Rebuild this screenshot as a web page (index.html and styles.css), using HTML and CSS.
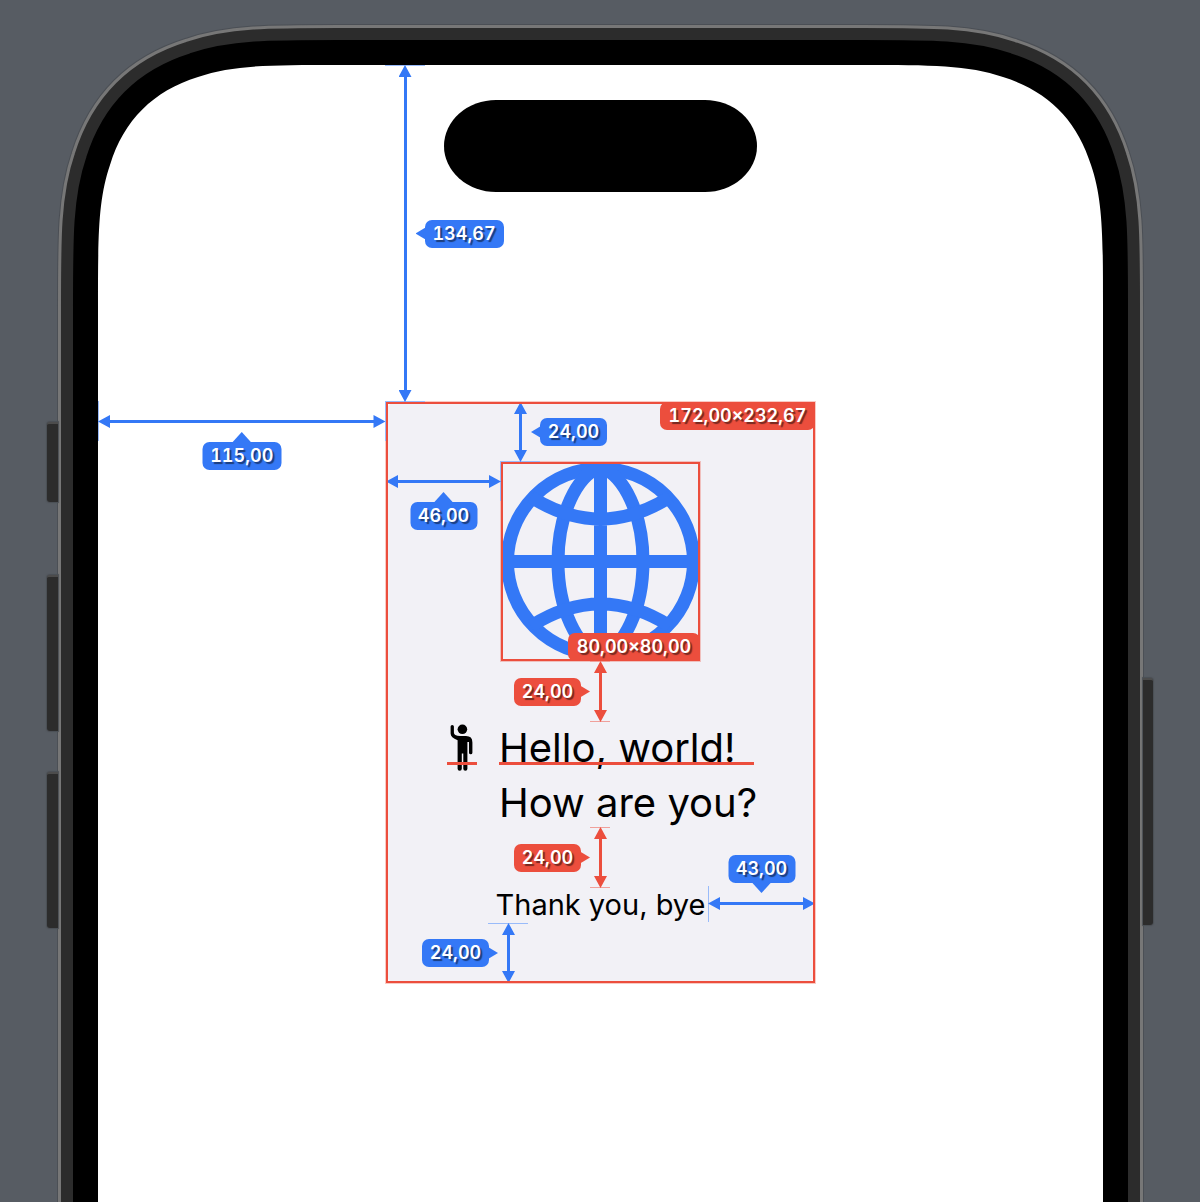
FILE: index.html
```html
<!DOCTYPE html>
<html lang="en">
<head>
<meta charset="utf-8">
<meta name="viewport" content="width=device-width, initial-scale=1">
<title>Layout inspector</title>
<link rel="stylesheet" href="styles.css">
</head>
<body>
<svg class="defs" aria-hidden="true">
  <path id="curve" d="M42 400V283C42 214 42 177 54 142C68 97 97 68 142 54C177 42 214 42 283 42H400V400Z"/>
  <symbol id="corner" viewBox="0 0 300 300">
    <rect class="c-page" width="300" height="300"/>
    <use href="#curve" class="c-edge"/>
    <use href="#curve" class="c-rim"/>
    <use href="#curve" class="c-band"/>
    <use href="#curve" class="c-bezel"/>
    <use href="#curve" class="c-screen"/>
  </symbol>
</svg>
<main class="phone">
  <i class="key key-action"></i>
  <i class="key key-up"></i>
  <i class="key key-down"></i>
  <i class="key key-power"></i>
  <svg class="corner left"><use href="#corner"/></svg>
  <svg class="corner right"><use href="#corner"/></svg>
  <div class="bezel">
    <div class="screen">
      <div class="island"></div>
      <section class="card">
        <div class="globe">
          <svg viewBox="0 0 199 199" role="img" aria-label="Globe">
            <g fill="none" stroke="currentColor" stroke-width="13">
              <circle cx="99.5" cy="99.5" r="93"/>
              <path d="M99.5 5C76 13 57 52 57 99.5S76 186 99.5 194C123 186 142 147 142 99.5S123 13 99.5 5Z"/>
              <path d="M99.5 6V193M6 99.5H193M30 35Q99.5 79 169 35M30 164Q99.5 120 169 164"/>
            </g>
          </svg>
          <span class="size">80,00×80,00</span>
        </div>
        <div class="greeting">
          <div class="person baseline">
            <svg viewBox="0 0 30 50" role="img" aria-label="Waving person">
              <circle cx="15.4" cy="7.3" r="4.8"/>
              <path d="M3.6 4.6Q3.6 2.9 5.2 2.9Q6.9 2.9 6.9 4.6V10.5Q6.9 12.2 8.3 13Q10.2 14.1 13 14.1H19Q25.4 14.1 25.4 20.4V30.7Q25.4 32.3 23.7 32.3Q22 32.3 22 30.7V20H20.4V46.8Q20.4 48.8 18.4 48.8Q16.3 48.8 16.3 46.8V31.5H14.8V46.8Q14.8 48.8 12.7 48.8Q10.6 48.8 10.6 46.8V18.3Q3.6 15.6 3.6 11.5Z"/>
            </svg>
          </div>
          <div class="lines baseline">
            <p>Hello, world!</p>
            <p>How are you?</p>
          </div>
        </div>
        <p class="bye">Thank you, bye</p>
        <span class="size">172,00×232,67</span>

        <div class="arrow v blue pad-top"><span class="tag from-left">24,00</span></div>
        <div class="arrow h blue globe-left"><span class="tag from-above">46,00</span></div>
        <div class="arrow v red gap-one"><span class="tag from-right">24,00</span></div>
        <div class="arrow v red gap-two"><span class="tag from-right">24,00</span></div>
        <div class="arrow h blue bye-right"><span class="tag from-below">43,00</span></div>
        <div class="arrow v blue pad-bottom"><span class="tag from-right">24,00</span></div>
      </section>
      <div class="arrow v blue card-top"><span class="tag from-left">134,67</span></div>
      <div class="arrow h blue card-left"><span class="tag from-above">115,00</span></div>
    </div>
  </div>
</main>
</body>
</html>
```

FILE: styles.css
```css
:root {
  --page: #575c63;
  --rim: #777777;
  --band: #2c2c2c;
  --edge: #4b4f55;
  --blue: #3478f6;
  --red: #ec4e3d;
}

* { box-sizing: border-box; }

body {
  margin: 0;
  min-height: 100vh;
  display: flex;
  background: var(--page);
  color: #000;
  font-family: Inter, "Liberation Sans", sans-serif;
}

p { margin: 0; }

.defs { position: absolute; width: 0; height: 0; }

/* Device */
.phone {
  position: relative;
  flex: 1;
  display: flex;
  margin: 25px 57px 0 58px;
  border: 3px solid var(--rim);
  border-bottom: 0;
  background: var(--band);
  padding: 12px 12px 0;
  box-shadow: 0 0 0 1px var(--edge);
}

.bezel {
  flex: 1;
  display: flex;
  background: #000;
  padding: 25px 25px 0;
}

.screen {
  flex: 1;
  display: flex;
  flex-direction: column;
  align-items: center;
  padding: 35px 0 219px;
  background: #fff;
}

/* Each corner repeats the frame layers as strokes around the screen's curve */
.corner {
  position: absolute;
  top: -5px;
  width: 300px;
  height: 300px;
}
.corner.left { left: -5px; }
.corner.right { right: -5px; transform: scaleX(-1); }
.c-page { fill: var(--page); }
.c-screen { fill: #fff; }
.c-edge, .c-rim, .c-band, .c-bezel { fill: none; }
.c-edge { stroke: var(--edge); stroke-width: 82px; }
.c-rim { stroke: var(--rim); stroke-width: 80px; }
.c-band { stroke: var(--band); stroke-width: 74px; }
.c-bezel { stroke: #000; stroke-width: 50px; }

.key {
  position: absolute;
  width: 11px;
  background: var(--band);
  border-top: 2px solid #4c4c4c;
  box-shadow: 0 0 1px 1px var(--edge);
}
.key-action, .key-up, .key-down { left: -14px; border-radius: 3px 0 0 3px; }
.key-action { top: 394px; height: 80px; }
.key-up { top: 547px; height: 156px; }
.key-down { top: 744px; height: 156px; }
.key-power { top: 650px; right: -13px; width: 10px; height: 247px; border-radius: 0 3px 3px 0; }

.island {
  position: relative;
  width: 313px;
  height: 92px;
  border-radius: 52px / 46px;
  background: #000;
}

/* Inspected view */
.card {
  position: relative;
  display: flex;
  flex-direction: column;
  align-items: center;
  gap: 60px;
  width: 429px;
  margin-top: 210px;
  padding: 60px 0;
  border-radius: 10px;
  background: #f2f1f6;
}

.card::after,
.globe::after {
  content: "";
  position: absolute;
  inset: 0;
  border: 2px solid var(--red);
  box-shadow: 0 0 0 1px rgba(236, 78, 61, 0.3);
  pointer-events: none;
}

.globe {
  position: relative;
  width: 199px;
  height: 199px;
  color: var(--blue);
}
.globe svg { display: block; }

.greeting {
  display: flex;
  gap: 22px;
  width: 307px;
  height: 106px;
}
.person { width: 30px; }
.person svg { display: block; width: 30px; height: 50px; margin-top: 1px; }
.lines {
  flex: 1;
  min-width: 0;
  display: flex;
  flex-direction: column;
  gap: 2px;
  font-size: 40px;
  line-height: 53px;
  white-space: nowrap;
}

.baseline { position: relative; }
.baseline::after {
  content: "";
  position: absolute;
  top: 41px;
  left: 0;
  right: 0;
  height: 3px;
  background: var(--red);
}

.bye {
  font-size: 29px;
  line-height: 36px;
}

/* Measurements */
.size, .tag {
  position: absolute;
  border-radius: 7px;
  color: #fff;
  font-size: 18px;
  font-weight: 600;
  font-variant-numeric: tabular-nums;
  line-height: 28px;
  text-align: center;
  white-space: nowrap;
  text-shadow: 2px 2px 1px rgba(0, 0, 0, 0.5);
}
.size { background: var(--red); }
.card > .size { top: 0; right: 0; width: 155px; }
.globe > .size { right: 0; bottom: 0; width: 132px; }

.arrow { --tick: 40px; --lead: 20px; position: absolute; color: var(--tone); }
.blue { --tone: var(--blue); --soft: #99bbfa; }
.red { --tone: var(--red); --soft: #f0a09b; --tick: 20px; --lead: 10px; }
.v {
  width: 13px;
  background: linear-gradient(var(--tone), var(--tone)) 5px 6px / 3px calc(100% - 12px) no-repeat;
}
.h {
  height: 13px;
  background: linear-gradient(var(--tone), var(--tone)) 6px 5px / calc(100% - 12px) 3px no-repeat;
}
.arrow::before {
  content: "";
  position: absolute;
  inset: 0;
}
.v::before {
  left: calc(6px - var(--lead));
  width: var(--tick);
  border: 1px solid var(--soft);
  border-width: 1px 0;
}
.h::before {
  top: calc(6px - var(--lead));
  height: var(--tick);
  border: 1px solid var(--soft);
  border-width: 0 1px;
}
.arrow::after {
  content: "";
  position: absolute;
  inset: 0;
  background: var(--tone);
}
.v::after {
  clip-path: polygon(50% 0, 100% 12px, 0 12px, 0 calc(100% - 12px), 100% calc(100% - 12px), 50% 100%, 0 calc(100% - 12px), 0 12px);
}
.h::after {
  clip-path: polygon(0 50%, 12px 0, 12px 100%, calc(100% - 12px) 100%, calc(100% - 12px) 0, 100% 50%, calc(100% - 12px) 100%, 12px 100%);
}

.tag { width: 67px; background: var(--tone); }
.card-top .tag, .card-left .tag { width: 79px; }
.tag::before {
  content: "";
  position: absolute;
  background: var(--tone);
}
.from-left, .from-right { top: 50%; margin-top: -14px; }
.from-left { left: 26px; }
.from-right { right: 26px; }
.from-above, .from-below { left: 50%; transform: translateX(-50%); }
.from-above { top: 27px; }
.from-below { bottom: 27px; }
.from-left::before, .from-right::before { top: 8px; width: 10px; height: 12px; }
.from-left::before { right: calc(100% - 1px); clip-path: polygon(0 50%, 100% 0, 100% 100%); }
.from-right::before { left: calc(100% - 1px); clip-path: polygon(0 0, 100% 50%, 0 100%); }
.from-above::before, .from-below::before { left: calc(50% - 10px); width: 20px; height: 11px; }
.from-above::before { bottom: calc(100% - 1px); clip-path: polygon(50% 0, 100% 100%, 0 100%); }
.from-below::before { top: calc(100% - 1px); clip-path: polygon(0 0, 100% 0, 50% 100%); }

/* Screen-level arrows are placed from the device frame's padding edge */
.card-top { top: 37px; left: calc(50% - 202px); height: 337px; }
.card-left { top: 387px; left: 37px; right: calc(50% + 215px); }
.pad-top { top: 0; left: 128px; height: 60px; }
.globe-left { top: 73px; left: 0; width: 115px; }
.gap-one { top: 259px; left: 208px; height: 61px; }
.gap-two { top: 425px; left: 208px; height: 61px; }
.bye-right { --tick: 36px; --lead: 17px; top: 495px; right: 0; width: 107px; }
.pad-bottom { bottom: 0; left: 116px; height: 60px; }
```
